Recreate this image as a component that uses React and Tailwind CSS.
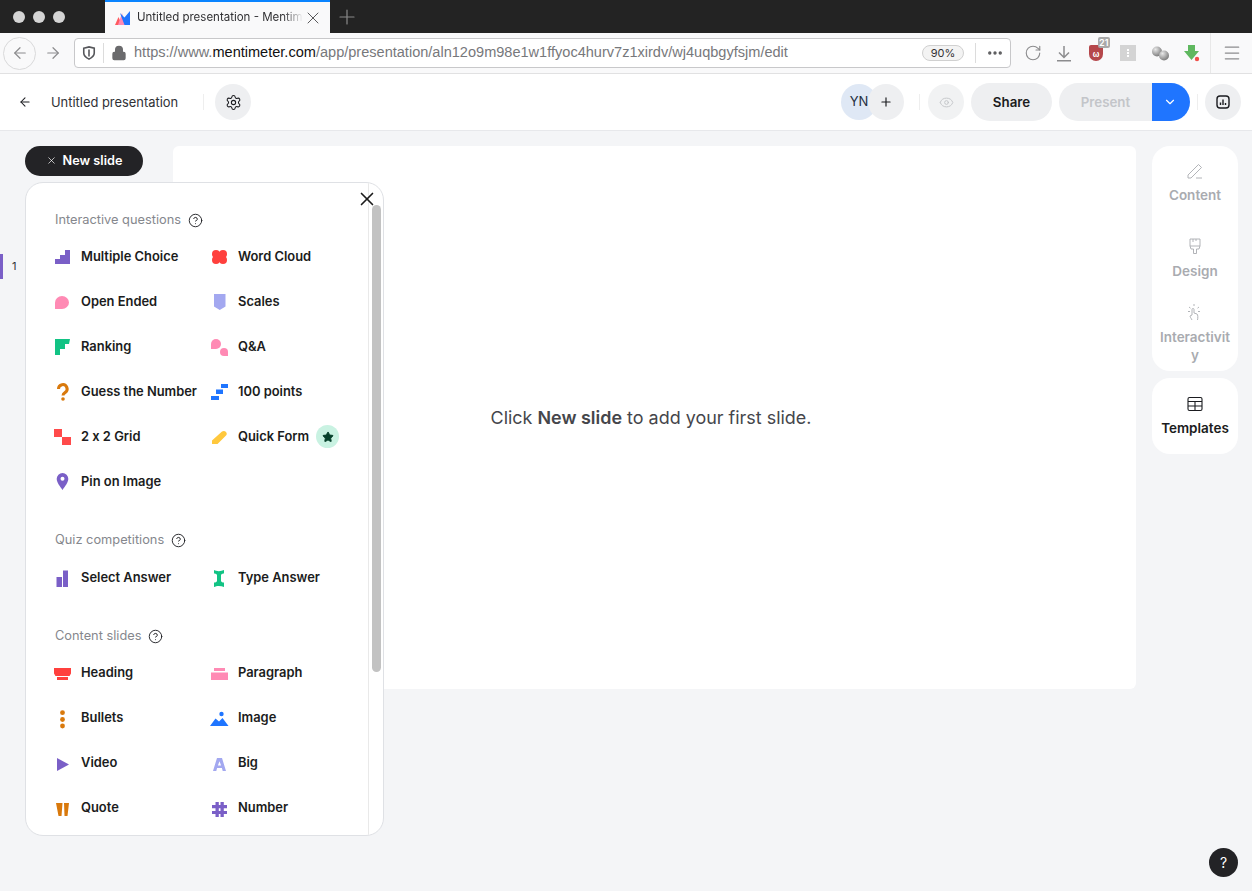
import React from "react";
import { ArrowLeft, ArrowRight, ChevronDown, CircleHelp, Eye, Lock, Menu, Plus, RotateCw, Settings, X, Ellipsis, Star } from "lucide-react";

const Icon = ({ children }) => (
  <svg width="18" height="18" viewBox="0 0 18 18" className="shrink-0 overflow-visible">
    {children}
  </svg>
);

const icons = {
  multiple: (
    <Icon>
      <path d="M1 11h5V7h5V2h5v14H1z" fill="#7a5fc7" />
    </Icon>
  ),
  cloud: (
    <Icon>
      <circle cx="5" cy="6" r="4" fill="#ff403d" />
      <circle cx="12" cy="6" r="4" fill="#ff403d" />
      <circle cx="5" cy="12" r="4" fill="#ff403d" />
      <circle cx="12" cy="12" r="4" fill="#ff403d" />
      <path d="M3 4h11v10H3z" fill="#ff403d" />
    </Icon>
  ),
  open: (
    <Icon>
      <path d="M1 16V9.500a7 6.500 0 1 1 7 6.500z" fill="#ff8ab4" />
    </Icon>
  ),
  scales: (
    <Icon>
      <path d="M3 1h11.500v12.500L8.750 17 3 13.500z" fill="#a3a8f0" />
    </Icon>
  ),
  ranking: (
    <Icon>
      <path d="M1 1h15l-1 5H11v5H6v6H1z" fill="#12c384" />
    </Icon>
  ),
  qa: (
    <Icon>
      <path d="M0 11V6a5 5 0 1 1 5 5z" fill="#ff8ab4" />
      <path d="M17 18h-4a4 4 0 1 1 4-4z" fill="#ff8ab4" />
    </Icon>
  ),
  guess: (
    <Icon>
      <path d="M4.500 6a4.300 4.300 0 1 1 6.500 3.600c-1.300.8-2 1.400-2 3" fill="none" stroke="#d9790c" strokeWidth="3" />
      <circle cx="9" cy="16" r="1.800" fill="#d9790c" />
    </Icon>
  ),
  points: (
    <Icon>
      <path d="M10 1h7v4h-7zM5 6.500h7V11H5zM0 13h8v4H0z" fill="#1f75ff" />
    </Icon>
  ),
  grid: (
    <Icon>
      <path d="M0 1h8v8h9v8H8V9H0z" fill="#ff4a4a" />
    </Icon>
  ),
  form: (
    <Icon>
      <path d="M1 12.500 11 3.500c1.500-1 3-.7 4 .5s1 2.500 0 3.500L6.500 16H1z" fill="#ffc83d" />
    </Icon>
  ),
  pin: (
    <Icon>
      <path fillRule="evenodd" d="M8.500 0a5.800 5.800 0 0 1 5.800 5.800c0 3.700-3.300 7.700-5.800 11.200-2.500-3.500-5.800-7.500-5.800-11.200A5.800 5.800 0 0 1 8.500 0zm0 3.800a2 2 0 1 0 0 4 2 2 0 0 0 0-4z" fill="#7a5fc7" />
    </Icon>
  ),
  select: (
    <Icon>
      <path d="M2.500 8h5.500v10H2.500zM9 1.500h5V18H9z" fill="#7a5fc7" />
    </Icon>
  ),
  type: (
    <Icon>
      <path d="M3 1c2.500 1.500 7 1.500 10 0v3.500c-1.500 0-2.500.5-3 1.500v6c.5 1 1.500 1.500 3 1.500V18c-3-1.500-7.500-1.500-10 0v-4.500c1.500 0 2.500-.5 3-1.500V6c-.5-1-1.500-1.500-3-1.500z" fill="#12c384" />
    </Icon>
  ),
  heading: (
    <Icon>
      <path d="M0 4h17v5.500L15.500 12h-14L0 9.500zM3 13h11v3H3z" fill="#ff403d" />
    </Icon>
  ),
  paragraph: (
    <Icon>
      <path d="M3 4h11v3H3zM0 8.500h17V16H0z" fill="#ff8ab4" />
    </Icon>
  ),
  bullets: (
    <Icon>
      <circle cx="8.500" cy="3.700" r="2.400" fill="#d9790c" />
      <circle cx="8.500" cy="10.500" r="2.400" fill="#d9790c" />
      <circle cx="8.500" cy="17" r="2.400" fill="#d9790c" />
    </Icon>
  ),
  image: (
    <Icon>
      <circle cx="10.500" cy="5" r="2.200" fill="#1f75ff" />
      <path d="M-1 17 4.500 9.500 8 12.500l3.500-3.500L17.500 17z" fill="#1f75ff" />
    </Icon>
  ),
  video: (
    <Icon>
      <path d="M3 4l12 6.500L3 17z" fill="#7a5fc7" />
    </Icon>
  ),
  big: (
    <Icon>
      <path fillRule="evenodd" d="M6 4h5l4 13h-3.300l-.8-3H6.100l-.8 3H2zm2.500 3.300L6.900 11.500h3.200z" fill="#a3a8f0" />
    </Icon>
  ),
  quote: (
    <Icon>
      <path d="M2 4h6.500L7.500 17H4.500zM10 4h5l-1.500 13h-3z" fill="#d9790c" />
    </Icon>
  ),
  number: (
    <Icon>
      <path d="M4.500 3h3.300v3h1.700V3h3.300v3H16v3.300h-3.200V12H16v3h-3.200v3H9.500v-3H7.800v3H4.500v-3H1v-3h3.500V9.300H1V6h3.500zm3.300 6.300V12h1.700V9.300z" fill="#7a5fc7" fillRule="evenodd" />
    </Icon>
  ),
};

const sections = [
  {
    title: "Interactive questions",
    gap: "mb-[26px]",
    listGap: "mt-[4px]",
    items: [
      ["multiple", "Multiple Choice"],
      ["cloud", "Word Cloud"],
      ["open", "Open Ended"],
      ["scales", "Scales"],
      ["ranking", "Ranking"],
      ["qa", "Q&A"],
      ["guess", "Guess the Number"],
      ["points", "100 points"],
      ["grid", "2 x 2 Grid"],
      ["form", "Quick Form", true],
      ["pin", "Pin on Image"],
    ],
  },
  {
    title: "Quiz competitions",
    gap: "mb-[26px]",
    listGap: "mt-[5px]",
    items: [
      ["select", "Select Answer"],
      ["type", "Type Answer"],
    ],
  },
  {
    title: "Content slides",
    gap: "",
    listGap: "mt-[4px]",
    items: [
      ["heading", "Heading"],
      ["paragraph", "Paragraph"],
      ["bullets", "Bullets"],
      ["image", "Image"],
      ["video", "Video"],
      ["big", "Big"],
      ["quote", "Quote"],
      ["number", "Number"],
    ],
  },
];

const SlideTypes = () => (
  <div className="absolute left-[25px] top-[182px] z-20 h-[654px] w-[359px] overflow-hidden rounded-[18px] border border-[#dfe1e5] bg-white">
    <button className="absolute right-[5px] top-[5px] z-10 text-[#1b1b1b]">
      <X size={22} strokeWidth={1.800} />
    </button>
    {/* scrollbar */}
    <div className="absolute bottom-0 right-0 top-0 w-[15px] border-l border-[#e9e9e9]">
      <div className="ml-[3px] mt-[22px] h-[467px] w-[9px] rounded-full bg-[#c2c2c2]" />
    </div>
    <div className="pl-[28px] pt-[27px]">
      {sections.map((section) => (
        <div key={section.title} className={section.gap}>
          <div className="ml-[1px] flex h-[20px] items-center gap-[7px] text-[12.800px] leading-5 text-[#85878d]">
            {section.title}
            <CircleHelp size={15} strokeWidth={1.500} className="text-[#1f2024]" />
          </div>
          <div className={`grid grid-cols-[157px_157px] ${section.listGap}`}>
            {section.items.map(([icon, label, star]) => (
              <div key={label} className="flex h-[45px] items-center gap-[9px] text-[12.900px] font-semibold text-[#1b1c20] [font-feature-settings:'calt'_0]">
                {icons[icon]}
                <span className="whitespace-nowrap">{label}</span>
                {star && (
                  <span className="ml-[-2px] flex h-[23px] w-[23px] items-center justify-center rounded-full bg-[#c9f2e2]">
                    <Star size={12} fill="#06402b" stroke="#06402b" />
                  </span>
                )}
              </div>
            ))}
          </div>
        </div>
      ))}
    </div>
  </div>
);

const SideTab = ({ icon, label, dark, className }) => (
  <button className={`flex w-full flex-col items-center text-[13.500px] font-semibold leading-[18px] ${dark ? "text-[#1b1c20]" : "text-[#a9abb0]"} ${className}`}>
    {icon}
    <span className="mt-[7px] w-[72px] break-all text-center">{label}</span>
  </button>
);

export default function App() {
  return (
    <div className="flex h-[891px] w-[1252px] flex-col overflow-hidden bg-[#f4f5f7] font-['Inter',sans-serif]">
      {/* tab strip */}
      <div className="flex h-[33px] shrink-0 items-stretch bg-[#232323]">
        <div className="flex w-[105px] items-center gap-[8px] pl-[13px]">
          <span className="h-[12px] w-[12px] rounded-full bg-[#d4d4d4]" />
          <span className="h-[12px] w-[12px] rounded-full bg-[#d4d4d4]" />
          <span className="h-[12px] w-[12px] rounded-full bg-[#d4d4d4]" />
        </div>
        <div className="flex w-[225px] items-center border-t-2 border-[#0a84ff] bg-[#f9f9fa] pl-[10px] pr-[7px]">
          <svg width="16" height="16" viewBox="0 0 16 16" className="shrink-0">
            <path d="M0 15 3.500 7 7 15z" fill="#ff5a5f" />
            <path d="M3 15 7 3l3 12z" fill="#ff8ab4" />
            <path d="M5 3l4.500 4.500L15 1v14H9.500z" fill="#1f75ff" />
          </svg>
          <span className="ml-[6px] w-[166px] overflow-hidden whitespace-nowrap text-[11.500px] text-[#303033] [mask-image:linear-gradient(to_right,black_88%,transparent)]">
            Untitled presentation - Mentim
          </span>
          <X size={20} strokeWidth={1.200} className="ml-auto shrink-0 text-[#5a5a5c]" />
        </div>
        <div className="flex items-center pl-[5px]">
          <Plus size={24} strokeWidth={1.200} className="text-[#8a8a8a]" />
        </div>
      </div>

      {/* browser toolbar */}
      <div className="flex h-[41px] shrink-0 items-center border-b border-[#e1e1e2] bg-[#f9f9fa] pl-[3px] text-[#8c8c8e]">
        <span className="flex h-[33px] w-[33px] items-center justify-center rounded-full border border-[#d9d9da]">
          <ArrowLeft size={18} strokeWidth={1.600} />
        </span>
        <ArrowRight size={18} strokeWidth={1.600} className="ml-[8px]" />
        <div className="ml-[12px] flex h-[30px] w-[937px] items-center rounded-[4px] border border-[#c8c8ca] bg-white">
          <svg width="14" height="14" viewBox="0 0 16 16" className="ml-[7px] shrink-0" fill="none" stroke="#55565a" strokeWidth="1.800">
            <path d="M2 2.500 8 1l6 1.500V8c0 3.500-3 5.500-6 7-3-1.500-6-3.500-6-7z" />
            <path d="M8 4v8" />
          </svg>
          <span className="ml-[7px] h-[20px] w-px bg-[#dcdcdc]" />
          <Lock size={16} fill="#6b6b6d" strokeWidth={2} className="ml-[7px] text-[#6b6b6d]" />
          <span className="ml-[7px] whitespace-nowrap font-['Liberation_Sans',sans-serif] text-[14.560px] text-[#77787b]">
            https://www.<span className="text-[#111]">mentimeter.com</span>/app/presentation/aln12o9m98e1w1ffyoc4hurv7z1xirdv/wj4uqbgyfsjm/edit
          </span>
          <span className="ml-auto flex h-[16px] w-[42px] items-center justify-center rounded-full border border-[#d0d0d0] bg-[#f3f3f3] text-[11px] text-[#333]">90%</span>
          <span className="ml-[11px] h-[20px] w-px bg-[#dcdcdc]" />
          <Ellipsis size={18} strokeWidth={2.500} className="ml-[10px] mr-[6px] text-[#5a5a5c]" />
        </div>
        <RotateCw size={18} strokeWidth={1.500} className="ml-[13px]" />
        <svg width="16" height="17" viewBox="0 0 16 17" fill="none" stroke="#8c8c8e" strokeWidth="1.500" className="ml-[14px]">
          <path d="M8 1v11M3 7.500l5 5 5-5M1 15.800h14" />
        </svg>
        <span className="relative ml-[17px] flex h-[16px] w-[14px] items-center justify-center rounded-b-[7px] rounded-t-[2px] bg-[#b5474b] pt-[2px] text-[8px] font-bold text-white">
          ω
          <span className="absolute -right-[7px] -top-[8px] rounded-[2px] bg-[#a9a9a9] px-[1.500px] text-[9px] font-semibold leading-[11px] text-white">21</span>
        </span>
        <span className="ml-[17px] flex h-[16px] w-[16px] flex-col items-center justify-center gap-[1px] bg-[#d4d4d4]">
          <span className="h-[2px] w-[2px] bg-white" />
          <span className="h-[2px] w-[2px] bg-white" />
          <span className="h-[2px] w-[2px] bg-white" />
        </span>
        <svg width="17" height="15" viewBox="0 0 17 15" className="ml-[16px]">
          <defs>
            <radialGradient id="sphere" cx="35%" cy="30%" r="75%">
              <stop offset="0%" stopColor="#e8e8e8" />
              <stop offset="100%" stopColor="#777" />
            </radialGradient>
          </defs>
          <circle cx="5" cy="5.500" r="5" fill="url(#sphere)" />
          <circle cx="12" cy="9.500" r="5" fill="url(#sphere)" />
        </svg>
        <svg width="17" height="18" viewBox="0 0 17 18" className="ml-[14px]">
          <path d="M5 1h7v6h4l-7.500 9L1 7h4z" fill="#5fb85f" />
          <circle cx="14" cy="15" r="2.200" fill="#f0504a" />
        </svg>
        <span className="ml-[10px] h-[40px] w-px bg-[#e8e8e8]" />
        <Menu size={20} strokeWidth={1.500} className="ml-[11px]" />
      </div>

      {/* app header */}
      <header className="flex h-[57px] shrink-0 items-center border-b border-[#e7e8eb] bg-white pl-[18px] pr-[11px]">
        <ArrowLeft size={14} strokeWidth={1.800} className="text-[#1b1c20]" />
        <span className="ml-[19px] pt-[1px] text-[12.900px] text-[#303136]">Untitled presentation</span>
        <span className="ml-[25px] h-[16px] w-px bg-[#eeeeee]" />
        <span className="ml-[11px] flex h-[36px] w-[36px] items-center justify-center rounded-full bg-[#eeeff1]">
          <Settings size={17} strokeWidth={1.500} className="text-[#1b1c20]" />
        </span>

        <div className="ml-auto flex items-center">
          <span className="flex h-[36px] w-[36px] items-center justify-center rounded-full bg-[#dfe8f5] text-[13px] text-[#26303f]">YN</span>
          <span className="ml-[-9px] flex h-[36px] w-[36px] items-center justify-center rounded-full bg-[#eeeff1]">
            <Plus size={14} strokeWidth={2} className="text-[#1b1c20]" />
          </span>
          <span className="ml-[15px] mr-[8px] h-[16px] w-px bg-[#eeeeee]" />
          <span className="flex h-[36px] w-[36px] items-center justify-center rounded-full bg-[#f1f2f3]">
            <Eye size={15} strokeWidth={1.500} className="text-[#c2c4c8]" />
          </span>
          <button className="ml-[7px] h-[38px] w-[81px] rounded-full bg-[#eeeff1] pt-[1px] text-[13.300px] font-semibold text-[#1b1c20]">Share</button>
          <button className="ml-[7px] h-[38px] w-[93px] rounded-l-full bg-[#eeeff1] pt-[1px] text-[13.300px] font-semibold text-[#c3c5c9]">Present</button>
          <button className="flex h-[38px] w-[38px] items-center justify-center rounded-r-full bg-[#1f75ff] pr-[2px] text-white">
            <ChevronDown size={14} strokeWidth={2} />
          </button>
          <span className="ml-[7px] mr-[7px] h-[16px] w-px bg-[#eeeeee]" />
          <span className="flex h-[36px] w-[36px] items-center justify-center rounded-full bg-[#eeeff1]">
            <svg width="14" height="14" viewBox="0 0 14 14" fill="none" stroke="#1b1c20" strokeWidth="1.400">
              <rect x="1" y="1" width="12" height="12" rx="3" />
              <path d="M4.500 10V7.500M7 10V4.500M9.500 10V8" />
            </svg>
          </span>
        </div>
      </header>

      {/* workspace */}
      <div className="relative flex min-h-0 flex-1 pr-[14px] pt-[15px]">
        <div className="relative w-[173px] shrink-0">
          <button className="ml-[25px] flex h-[30px] w-[118px] items-center justify-center gap-[6px] rounded-full bg-[#232326] pb-[1px] text-[12.700px] font-semibold text-white">
            <X size={11} strokeWidth={1.500} />
            New slide
          </button>
          <div className="absolute left-0 top-[108px] h-[25px] w-[3px] bg-[#7a5fc7]" />
          <span className="absolute left-[12px] top-[113px] text-[11px] leading-[14px] text-[#303136]">1</span>
        </div>
        <div className="flex h-[543px] w-[963px] shrink-0 items-center justify-center rounded-[6px] bg-white pt-[1px]">
          <p className="ml-[-7px] text-[17.950px] text-[#45464b]">
            Click <b className="font-semibold">New slide</b> to add your first slide.
          </p>
        </div>
        <aside className="ml-[16px] flex w-[86px] flex-col gap-[7px]">
          <div className="flex h-[225px] flex-col rounded-[18px] bg-white pt-[17px]">
            <SideTab
              label="Content"
              className="h-[75px]"
              icon={
                <svg width="16" height="16" viewBox="0 0 16 16" fill="none" stroke="#a9abb0" strokeWidth="0.900">
                  <path d="M1 15v-3L11.500 1.500l3 3L4 15zM9 15h6" />
                </svg>
              }
            />
            <SideTab
              label="Design"
              className="h-[65px]"
              icon={
                <svg width="16" height="17" viewBox="0 0 16 17" fill="none" stroke="#a9abb0" strokeWidth="0.900">
                  <path d="M3 1h10v7H3zM3 8l1 3h2.500v4.500h3V11H12l1-3M6 1v3M9 1v2" />
                </svg>
              }
            />
            <SideTab
              label="Interactivity"
              icon={
                <svg width="16" height="18" viewBox="0 0 16 18" fill="none" stroke="#a9abb0" strokeWidth="0.900">
                  <path d="M5 17c-1-2-2-3-2-4l2-1V6.500a1 1 0 0 1 2 0V10l3 1c1 .5 1 4 .5 6M7 1v2M2 4l1.500 1.200M12 4l-1.500 1.200M1 8.500h2M11 8.500h2" />
                </svg>
              }
            />
          </div>
          <div className="flex h-[76px] items-center rounded-[18px] bg-white">
            <SideTab
              label="Templates"
              dark
              icon={
                <svg width="16" height="16" viewBox="0 0 16 16" fill="none" stroke="#1b1c20" strokeWidth="1.100">
                  <rect x="1" y="1.500" width="14" height="13" rx="1.500" />
                  <path d="M1 5.500h14M1 10h14M8 5.500v9" />
                </svg>
              }
            />
          </div>
        </aside>
        <span className="absolute bottom-[14px] right-[14px] flex h-[29px] w-[29px] items-center justify-center rounded-full bg-[#232326] text-[14px] font-normal text-white">?</span>
      </div>

      <SlideTypes />
    </div>
  );
}
